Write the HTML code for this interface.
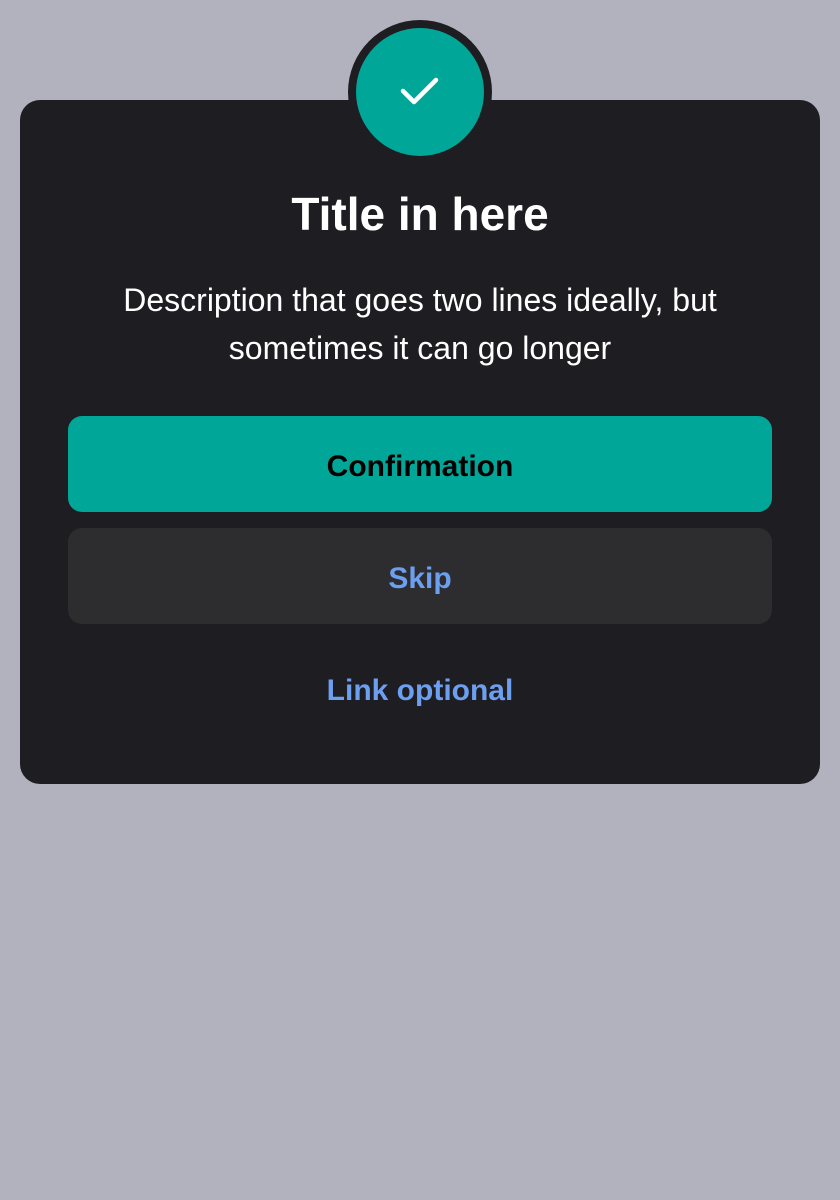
<!DOCTYPE html>
<html><head><style>
body{margin:0;width:840px;height:1200px;background:#b2b2be;font-family:"Liberation Sans",Roboto,sans-serif;position:relative;overflow:hidden}
.card{position:absolute;left:20px;top:100px;width:800px;height:684px;background:#1e1d22;border-radius:20px}
.outer{position:absolute;left:348px;top:20px;width:144px;height:144px;border-radius:50%;background:#1e1d22}
.inner{position:absolute;left:356px;top:28px;width:128px;height:128px;border-radius:50%;background:#00a698}
.t{position:absolute;left:0;width:840px;text-align:center}
.btn{position:absolute;left:68px;width:704px;height:96px;border-radius:14px;text-align:center;line-height:102px;font-weight:bold;font-size:30px}
</style></head><body>
<div class="card"></div>
<div class="outer"></div>
<div class="inner"></div>
<svg style="position:absolute;left:0;top:0" width="840" height="200"><path d="M403 91 L414 102 L436 80" stroke="#fff" stroke-width="4.5" fill="none" stroke-linecap="round" stroke-linejoin="round"/></svg>
<div class="t" style="top:187px;font-size:46px;font-weight:bold;color:#fff">Title in here</div>
<div class="t" style="top:276px;font-size:32px;line-height:48px;color:#fff">Description that goes two lines ideally, but<br>sometimes it can go longer</div>
<div class="btn" style="top:416px;background:#00a698;color:#000">Confirmation</div>
<div class="btn" style="top:528px;background:#2d2d30;color:#6d9ff0">Skip</div>
<div class="t" style="top:674px;font-size:30px;font-weight:bold;color:#6d9ff0">Link optional</div>
</body></html>
